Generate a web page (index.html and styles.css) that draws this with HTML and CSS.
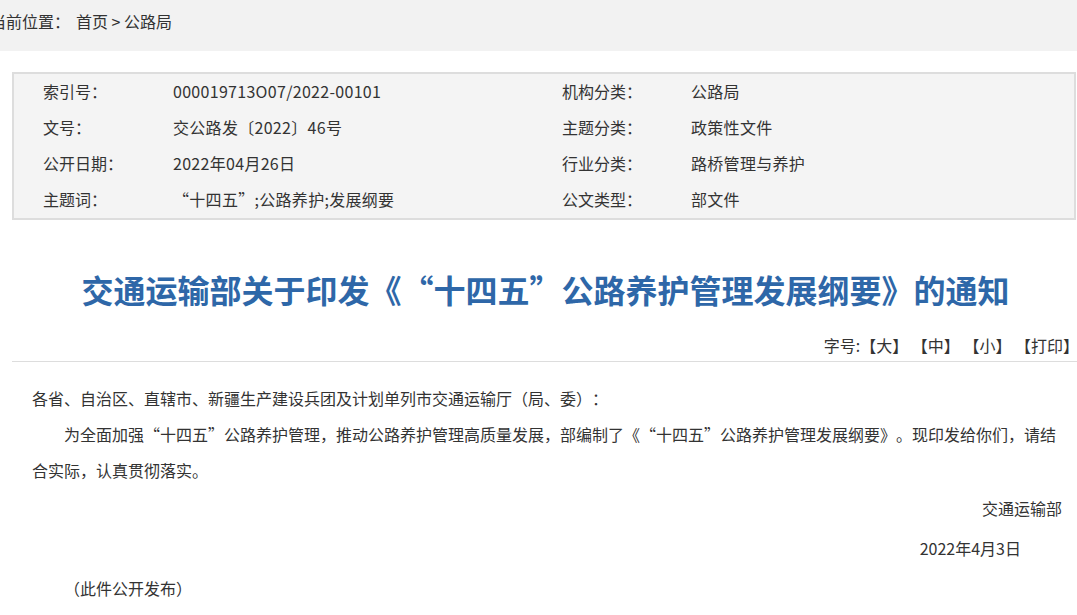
FILE: index.html
```html
<!DOCTYPE html>
<html lang="zh-CN">
<head>
    <meta charset="UTF-8">
    <meta name="viewport" content="width=device-width, initial-scale=1.0">
    <title>交通运输部关于印发《“十四五”公路养护管理发展纲要》的通知</title>
    <link rel="stylesheet" href="styles.css">
</head>
<body>
    <div class="crumb">
        <span class="crumb-label">当前位置：</span><a href="#">首页</a> &gt; <a href="#">公路局</a>
    </div>

    <div class="main">
        <div class="info">
            <span class="label">索引号：</span><span class="value">000019713O07/2022-00101</span>
            <span class="label">机构分类：</span><span class="value">公路局</span>
            <span class="label">文号：</span><span class="value">交公路发〔2022〕46号</span>
            <span class="label">主题分类：</span><span class="value">政策性文件</span>
            <span class="label">公开日期：</span><span class="value">2022年04月26日</span>
            <span class="label">行业分类：</span><span class="value">路桥管理与养护</span>
            <span class="label">主题词：</span><span class="value">“十四五”;公路养护;发展纲要</span>
            <span class="label">公文类型：</span><span class="value">部文件</span>
        </div>

        <h1 class="title">交通运输部关于印发《“十四五”公路养护管理发展纲要》的通知</h1>

        <div class="tools">字号:<a href="#">【大】</a> <a href="#">【中】</a> <a href="#">【小】</a> <a href="#">【打印】</a></div>

        <div class="content">
            <p>各省、自治区、直辖市、新疆生产建设兵团及计划单列市交通运输厅（局、委）：</p>
            <p class="indent">为全面加强“十四五”公路养护管理，推动公路养护管理高质量发展，部编制了《“十四五”公路养护管理发展纲要》。现印发给你们，请结合实际，认真贯彻落实。</p>
            <p class="sign">交通运输部</p>
            <p class="sign date">2022年4月3日</p>
            <p class="indent note">（此件公开发布）</p>
        </div>
    </div>
</body>
</html>
```

FILE: styles.css
```css
body {
    font-family: "Noto Sans CJK SC", sans-serif;
    font-size: 16px;
    color: #333;
    margin: 0;
    overflow: hidden;
    text-spacing-trim: space-all; /* keep full-width punctuation at full width */
}
a {
    color: #333;
    text-decoration: none;
}

/* breadcrumb bar */
.crumb {
    height: 51px;
    line-height: 42px;
    background-color: #f2f2f2;
    white-space: nowrap;
}
.crumb-label {
    margin-left: -10px;
    margin-right: 6px;
}

.main {
    margin-left: 12px;
    width: 1067px;
}

/* document meta box */
.info {
    display: grid;
    grid-template-columns: 130px 389px 129px 1fr;
    grid-auto-rows: 36px;
    margin: 21px 3px 0 0;
    padding-left: 29px;
    border: 2px solid #ddd;
    background-color: #f4f4f4;
    line-height: 35px;
}
.info .value {
    letter-spacing: 0.3px;
}

.title {
    margin: 49px 0 0;
    font-size: 32px;
    line-height: 40px;
    font-weight: bold;
    color: #2e67a8;
    text-align: center;
}

.tools {
    margin-top: 24px;
    padding-bottom: 4px;
    line-height: 24px;
    text-align: right;
    border-bottom: 1px solid #ddd;
}

.content {
    padding: 18px 17px 0 20px;
}
.content p {
    margin: 0;
    line-height: 36px;
}
.content .indent {
    text-indent: 2em;
}
.content .sign {
    line-height: 40px;
    text-align: right;
}
.content .date {
    padding-right: 41px;
}
.content .note {
    line-height: 40px;
}
```
